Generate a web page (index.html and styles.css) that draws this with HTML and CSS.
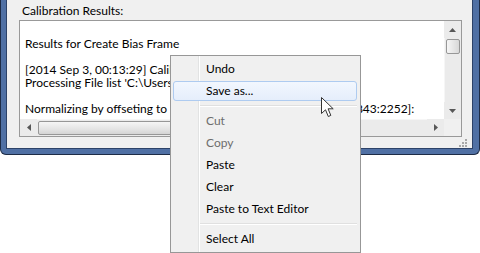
FILE: index.html
```html
<!DOCTYPE html>
<html lang="en">
<head>
    <meta charset="UTF-8">
    <title>Calibration Results</title>
    <link rel="stylesheet" href="styles.css">
</head>
<body>

<div class="window">
    <div class="client">
        <div class="label">Calibration Results:</div>

        <div class="textbox">
            <div class="log">
                <div class="line"></div>
                <div class="line">Results for Create Bias Frame</div>
                <div class="line"></div>
                <div class="line">[2014 Sep 3, 00:13:29] Calibration started</div>
                <div class="line">Processing File list 'C:\Users\Pixinsight\Bias\bias_list.txt'</div>
                <div class="line"></div>
                <div class="line">Normalizing by offseting to 'Mean' of frame in rectangle [0, 0, 3843:2252]:</div>
            </div>

            <div class="vscroll">
                <div class="sbtn">
                    <svg width="7" height="4" viewBox="0 0 7 4"><polygon points="3.5,0 7,4 0,4" fill="#575757"/></svg>
                </div>
                <div class="track vtrack">
                    <div class="thumb vthumb"></div>
                </div>
                <div class="sbtn">
                    <svg width="7" height="4" viewBox="0 0 7 4"><polygon points="0,0 7,0 3.5,4" fill="#575757"/></svg>
                </div>
            </div>

            <div class="hscroll">
                <div class="sbtn">
                    <svg width="4" height="7" viewBox="0 0 4 7"><polygon points="4,0 4,7 0,3.5" fill="#575757"/></svg>
                </div>
                <div class="track htrack">
                    <div class="thumb hthumb"></div>
                </div>
                <div class="sbtn">
                    <svg width="4" height="7" viewBox="0 0 4 7"><polygon points="0,0 4,3.5 0,7" fill="#575757"/></svg>
                </div>
            </div>

            <div class="corner"></div>
        </div>

        <div class="grip-row">
            <svg class="grip" width="10" height="8" viewBox="0 0 10 8">
                <rect x="7" y="0" width="2" height="2" fill="#a8a8a8"/>
                <rect x="4" y="3" width="2" height="2" fill="#a8a8a8"/>
                <rect x="7" y="3" width="2" height="2" fill="#a8a8a8"/>
                <rect x="1" y="6" width="2" height="2" fill="#a8a8a8"/>
                <rect x="4" y="6" width="2" height="2" fill="#a8a8a8"/>
                <rect x="7" y="6" width="2" height="2" fill="#a8a8a8"/>
            </svg>
        </div>
    </div>
</div>

<!-- Context menu -->
<div class="menu">
    <div class="menu-item">Undo</div>
    <div class="menu-item hover">Save as...</div>
    <div class="menu-sep"></div>
    <div class="menu-item disabled">Cut</div>
    <div class="menu-item disabled">Copy</div>
    <div class="menu-item">Paste</div>
    <div class="menu-item">Clear</div>
    <div class="menu-item">Paste to Text Editor</div>
    <div class="menu-sep"></div>
    <div class="menu-item">Select All</div>
</div>

<svg class="cursor" width="13" height="21" viewBox="0 0 13 21">
    <path d="M0.5,0.5 L0.5,16.5 L4.5,12.8 L7.3,19.5 L9.8,18.4 L7.1,11.8 L12.2,11.8 Z" fill="#fff" stroke="#333" stroke-width="1" stroke-linejoin="round"/>
</svg>

</body>
</html>
```

FILE: styles.css
```css
body {
    margin: 0;
    padding: 0;
    background-color: #fff;
    font-family: Lato, 'Noto Sans', sans-serif;
    font-size: 12px;
    color: #000;
    overflow: hidden;
}
.window {
    width: 480px;
    height: 155px;
    box-sizing: border-box;
    padding: 0 6px 5px 5px;
    background-color: #5070a4;
    border: 1px solid #1e2c46;
    border-top: none;
    border-radius: 0 0 6px 6px;
}
.client {
    height: 149px;
    box-sizing: border-box;
    padding: 3px 10px 0 12px;
    background-color: #f0f0f0;
    border: 1px solid #2d4268;
    border-top: none;
    display: flex;
    flex-direction: column;
}
.label {
    height: 15px;
    line-height: 15px;
    margin: 0 0 2px 3px;
}
.textbox {
    width: 443px;
    height: 117px;
    flex: none;
    box-sizing: border-box;
    border: 1px solid #999;
    background-color: #fff;
    display: grid;
    grid-template-columns: minmax(0, 1fr) 17px;
    grid-template-rows: minmax(0, 1fr) 17px;
}
.log {
    padding: 3px 0 0 5px;
    overflow: hidden;
    min-width: 0;
}
.line {
    height: 13px;
    line-height: 13px;
    white-space: pre;
}
/* Scrollbars */
.vscroll {
    display: flex;
    flex-direction: column;
    background-color: #ebebeb;
}
.hscroll {
    display: flex;
    background-color: #ebebeb;
    min-width: 0;
}
.sbtn {
    width: 17px;
    height: 17px;
    flex: none;
    display: flex;
    align-items: center;
    justify-content: center;
}
.track {
    flex: 1;
    display: flex;
    min-width: 0;
}
.vtrack {
    flex-direction: column;
    padding: 1px 1px 0 1px;
    border-left: 1px solid #f6f6f6;
}
.htrack {
    align-items: center;
    padding: 0 0 0 1px;
    border-top: 1px solid #f6f6f6;
}
.thumb {
    box-sizing: border-box;
    border: 1px solid #979797;
    border-radius: 2px;
}
.vthumb {
    height: 15px;
    background: linear-gradient(to right, #f6f6f6, #e4e4e4 60%, #d8d8d8);
}
.hthumb {
    width: 280px;
    height: 14px;
    background: linear-gradient(to bottom, #f6f6f6, #e4e4e4 60%, #d4d4d4);
}
.corner {
    background-color: #f0f0f0;
}
.grip-row {
    flex: 1;
    display: flex;
    justify-content: flex-end;
    align-items: center;
    margin-right: -6px;
}
/* Context menu */
.menu {
    position: absolute;
    left: 170px;
    top: 55px;
    width: 191px;
    box-sizing: border-box;
    padding: 2px 3px 2px 2px;
    border: 1px solid #979797;
    background: linear-gradient(to right, #f0f0f0 27px, #e2e3e3 27px, #e2e3e3 28px, #fff 28px, #fff 29px, #f0f0f0 29px);
    display: flex;
    flex-direction: column;
}
.menu-item {
    height: 18px;
    line-height: 18px;
    margin: 1px 0;
    padding-left: 32px;
    border: 1px solid transparent;
    border-radius: 3px;
}
.menu-item.hover {
    border-color: #aecbf0;
    background: linear-gradient(to bottom, #f2f7fe, #e5eefb);
}
.menu-item.disabled {
    color: #6d6d6d;
}
.menu-sep {
    height: 8px;
    margin-left: 27px;
    background: linear-gradient(to bottom, transparent 3px, #e0e0e0 3px, #e0e0e0 4px, #fff 4px, #fff 5px, transparent 5px);
}
.cursor {
    position: absolute;
    left: 321px;
    top: 97px;
}
```
